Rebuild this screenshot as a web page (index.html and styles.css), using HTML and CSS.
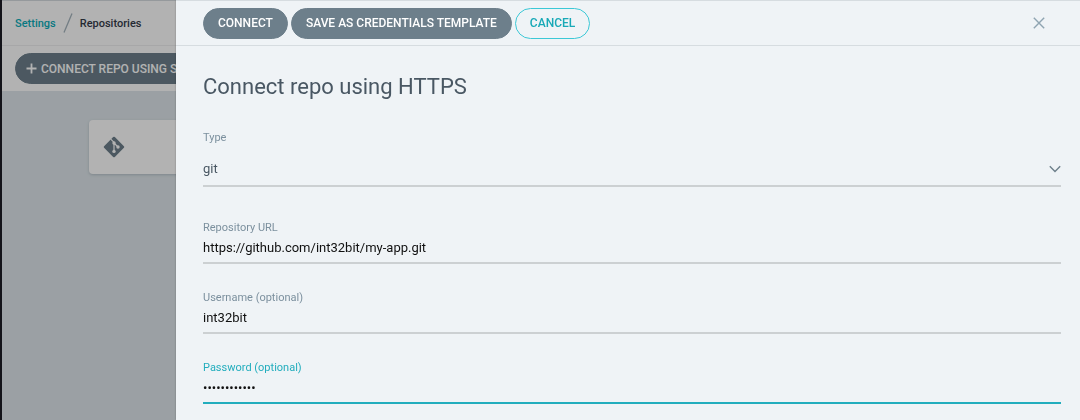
FILE: index.html
```html
<!DOCTYPE html>
<html lang="en">
<head>
    <meta charset="UTF-8">
    <meta name="viewport" content="width=device-width, initial-scale=1.0">
    <title>Repositories</title>
    <link rel="stylesheet" href="styles.css">
</head>
<body>
    <div class="page">
        <nav class="breadcrumbs">
            <a href="#settings">Settings</a>
            <svg class="separator" width="10" height="20" viewBox="0 0 10 20"><path d="M9 .5L1 19.5" stroke="#a5b4bd" stroke-width="1.3"/></svg>
            <span>Repositories</span>
        </nav>
        <div class="toolbar">
            <button class="btn btn-add" type="button">
                <svg width="11" height="11" viewBox="0 0 11 11"><path d="M5.5 .5v10M.5 5.5h10" stroke="#fff" stroke-width="1.8"/></svg>
                CONNECT REPO USING SSH
            </button>
        </div>
        <main class="repos">
            <div class="repo-card">
                <svg width="22" height="22" viewBox="0 0 22 22">
                    <rect x="3.4" y="3.4" width="15.2" height="15.2" rx="1.2" fill="#6d7f8b" transform="rotate(45 11 11)"/>
                    <path d="M7.6 2.8L11 6.4V15.5M11 7l4 4" fill="none" stroke="#fff" stroke-width="1.2"/>
                    <circle cx="11" cy="7" r="1.7" fill="#fff"/>
                    <circle cx="11" cy="15.4" r="1.7" fill="#fff"/>
                    <circle cx="15" cy="11" r="1.7" fill="#fff"/>
                </svg>
            </div>
        </main>
    </div>

    <div class="backdrop"></div>

    <form class="panel">
        <header class="panel-header">
            <button class="btn" type="button">CONNECT</button>
            <button class="btn" type="button">SAVE AS CREDENTIALS TEMPLATE</button>
            <button class="btn btn-outline" type="button">CANCEL</button>
            <button class="close" type="button" aria-label="Close">
                <svg width="12" height="12" viewBox="0 0 12 12"><path d="M.8 .8l10.4 10.4M11.2 .8L.8 11.2" stroke="#8fa4b1" stroke-width="1.4"/></svg>
            </button>
        </header>
        <div class="panel-body">
            <h1>Connect repo using HTTPS</h1>
            <div class="field field-type">
                <label for="type">Type</label>
                <div class="select">
                    <select id="type">
                        <option>git</option>
                        <option>helm</option>
                    </select>
                    <svg width="12" height="8" viewBox="0 0 12 8"><path d="M.8 1.2L6 6.4l5.2-5.2" fill="none" stroke="#6d7f8b" stroke-width="1.4"/></svg>
                </div>
            </div>
            <div class="field">
                <label for="url">Repository URL</label>
                <input id="url" type="text" value="https://github.com/int32bit/my-app.git">
            </div>
            <div class="field">
                <label for="username">Username (optional)</label>
                <input id="username" type="text" value="int32bit">
            </div>
            <div class="field active">
                <label for="password">Password (optional)</label>
                <input id="password" type="password" value="abcdefghijkl">
            </div>
        </div>
    </form>
</body>
</html>
```

FILE: styles.css
```css
* {
    box-sizing: border-box;
}
body {
    margin: 0;
    font-family: Roboto, "Liberation Sans", sans-serif;
    font-size: 13px;
    color: #495763;
    overflow: hidden;
}
svg {
    display: block;
    flex-shrink: 0;
}

/* page behind the panel */
.page {
    display: flex;
    flex-direction: column;
    min-height: 100vh;
    border-left: 2px solid #1c1c24;
    background-color: #dee6eb;
}
.breadcrumbs {
    display: flex;
    align-items: center;
    gap: 7px;
    height: 46px;
    padding-left: 13px;
    border-top: 1px solid #d6dce0;
    border-bottom: 1px solid #eff0f1;
    background-color: #fff;
    font-size: 11px;
    font-weight: 500;
    color: #363c4a;
}
.breadcrumbs a {
    color: #0dadb9;
    text-decoration: none;
}
.toolbar {
    display: flex;
    align-items: center;
    height: 46px;
    padding-left: 13px;
    background-color: #fff;
    border-bottom: 1px solid #dee6eb;
}
.repos {
    padding: 28px 87px;
}
.repo-card {
    display: flex;
    align-items: center;
    height: 54px;
    padding-left: 14px;
    border-radius: 4px;
    background-color: #fff;
    box-shadow: 0 1px 3px #b5c0c8;
}

.btn {
    height: 31px;
    padding: 0 14px;
    border: 1px solid #6d7f8b;
    border-radius: 16px;
    background-color: #6d7f8b;
    color: #fff;
    font-family: inherit;
    font-size: 12px;
    font-weight: 500;
    white-space: nowrap;
    cursor: pointer;
}
.btn-add {
    display: flex;
    align-items: center;
    gap: 4px;
    padding: 0 10px;
}
.btn-outline {
    border-color: #3cc8d6;
    background-color: transparent;
    color: #18a9b7;
}

.backdrop {
    position: fixed;
    inset: 0;
    background-color: rgba(0, 0, 0, 0.3);
}

/* sliding panel */
.panel {
    position: fixed;
    top: 0;
    right: 0;
    bottom: 0;
    left: 176px;
    overflow: hidden;
    border-top: 1px solid #d6dce0;
    background-color: #eff3f6;
    box-shadow: 0 0 2px rgba(0, 0, 0, 0.3);
}
.panel-header {
    display: flex;
    align-items: center;
    gap: 3px;
    height: 45px;
    padding: 0 35px 0 27px;
    border-bottom: 1px solid #d6dce0;
}
.close {
    margin-left: auto;
    padding: 0;
    border: none;
    background: none;
    cursor: pointer;
}
.panel-body {
    padding: 26px 19px 0 27px;
}
h1 {
    margin: 0 0 28px;
    font-size: 22px;
    font-weight: 400;
    line-height: 30px;
}
.field {
    margin-bottom: 26px;
}
.field label {
    display: block;
    font-size: 11px;
    line-height: 16px;
    color: #7c909e;
}
.field input,
.field select {
    display: block;
    width: 100%;
    height: 28px;
    padding: 0 0 4px;
    border: none;
    border-bottom: 2px solid #ccd0d2;
    border-radius: 0;
    outline: none;
    background: none;
    color: #111;
    font-family: inherit;
    font-size: 13px;
}
.field-type {
    margin-bottom: 33px;
}
.field .select {
    display: flex;
    align-items: center;
    height: 41px;
    padding-top: 6px;
    border-bottom: 2px solid #ccd0d2;
}
.field select {
    padding: 0;
    appearance: none;
    border: none;
    color: #495763;
}
.field.active label {
    color: #22adbd;
}
.field.active input {
    border-color: #22adbd;
}
```
